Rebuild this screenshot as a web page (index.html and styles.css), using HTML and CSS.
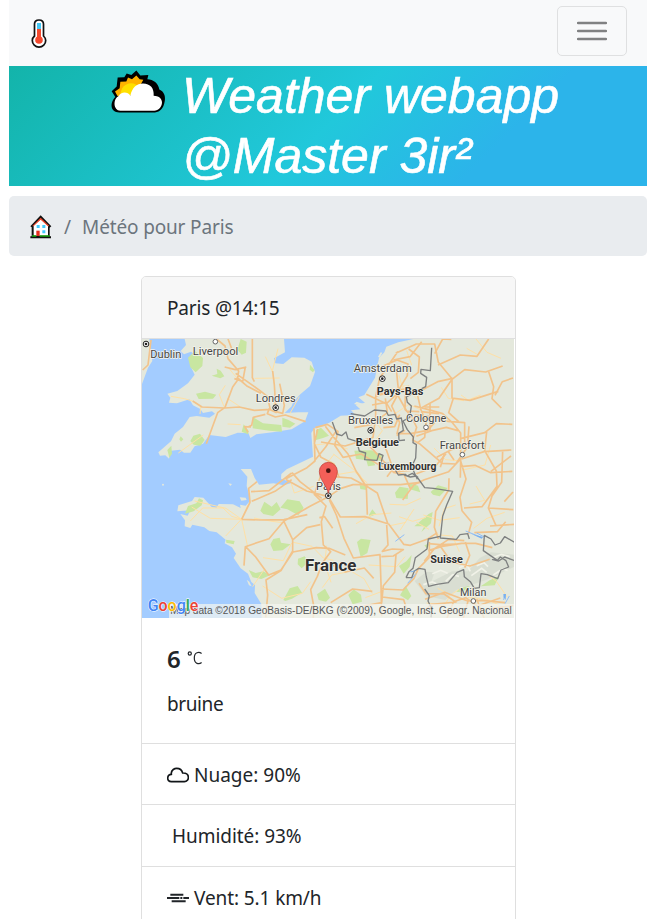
FILE: index.html
```
<!DOCTYPE html>
<html lang="fr">
<head>
<meta charset="utf-8">
<title>Weather webapp</title>
<link rel="stylesheet" href="styles.css">
</head>
<body>
<nav class="navbar">
  <a class="brand" aria-label="Accueil">
    <svg class="thermo" viewBox="0 0 16 30"><path d="M8 2C5.200 2 3.500 3.500 3.500 6v12C1.800 19.500 1.300 21 1.300 22.400A6.400 6.400 0 0 0 14.700 22.400c0-1.500-.7-3-2.200-4.400V6C12.500 3.500 10.800 2 8 2z" fill="#fff" stroke="#111" stroke-width="1.700"/><path d="M6 5h4v7H6z" fill="#45c8f5"/><path d="M6 11h4v10H6z" fill="#f4492e"/><circle cx="8" cy="22" r="3.800" fill="#f4492e"/></svg>
  </a>
  <button class="toggler" aria-label="Menu"><svg viewBox="0 0 30 30"><path d="M1 7h28M1 15h28M1 23h28" stroke="#808182" stroke-width="2.500" stroke-linecap="round"/></svg></button>
</nav>
<header class="hero">
  <svg class="sun-cloud" viewBox="0 0 240 165"><g transform="translate(0 -1) scale(1 1.045)"><path d="M46 93L35 76l15-13 3-26 20-1 7-11 14 5 15-13 12 14 24-1-3 12c18 0 33 12 36 29 15 6 19 20 16 35-3 19-14 30-29 31H58c-28 0-29-28-12-44z"/><path d="M52 89l-7-12 14-9 2-19 18-1 5-11 12 5 13-11 10 11 11 1-8 14-43 42z" fill="#ffb300"/><path d="M61 88c1-21 14-35 32-35 10 0 18 4 20 9L90 91z" fill="#ffe000"/><path d="M63 83c11-6 22-2 28 6 5-23 19-35 38-35 22 0 34 14 32 35 14 0 25 8 25 19 0 14-11 24-23 24H61c-21 0-23-33-5-42 2-3 4-5 7-7z" fill="#fff"/></g></svg>
  <h1>Weather webapp<br>@Master 3ir²</h1>
</header>
<nav class="breadcrumb">
  <svg class="home" viewBox="0 0 66 72"><path d="M5 64V37L1 34 32 1l32 33-5 4v26h4v6H1v-6z" fill="#111"/><path d="M11 62V32L32 12l22 20v30z" fill="#fff"/><path d="M7 33L32 8l26 25-4 1-22-20-22 20z" fill="#f0452b"/><path d="M20 30h9v9h-9zm17 0h9v9h-9zm0 16h9v9h-9z" fill="#42cafd"/><path d="M19 47h10v16H19z" fill="#e52d1e"/><path d="M6 61h13v4H6zm23 0h30v4H29z" fill="#16a60c"/></svg>
  <span class="slash">/</span><span class="crumb">Météo pour Paris</span>
</nav>
<main class="card">
  <div class="card-head"><span class="place">Paris @14:15</span></div>
  <svg class="map" viewBox="6 12 1116 837" preserveAspectRatio="none">
    <rect x="6" y="12" width="1116" height="837" fill="#a3ccff"/>
    <g class="land">
      <path d="M6 12H28L37 78 24 98 6 147z"/>
      <path d="M134 12L138 30 122 48 132 58 153 50 169 63 153 96 164 119 144 145 112 168 82 176 91 188 87 203 111 205 148 193 159 211 181 222 189 234 216 229 225 236 208 248 170 243 149 246 129 276 104 296 93 319 55 352 60 362 76 361 87 371 93 347 120 344 132 353 151 353 164 334 189 326 208 300 257 306 293 293 325 294 331 309 349 298 398 292 455 283 495 259 505 232 476 232 434 234 455 214 459 202 481 178 510 153 525 111 515 80 493 68 455 67 430 87 406 85 402 70 435 52 432 12z"/>
      <path d="M1122 12H820L775 22 739 35 733 52 717 69 705 128 673 180 655 187 675 203 647 210 661 223 633 226 646 240 602 242 568 263 523 280 514 294 519 365 440 403 424 417 423 431 457 443 431 451 401 445 357 449 344 429 333 402 302 402 322 425 320 453 328 481 330 498 317 512 300 509 302 519 279 508 236 507 230 518 215 516 190 488 164 486 156 498 115 511 112 529 151 526 143 542 121 537 135 556 134 574 151 579 157 569 193 577 208 588 230 592 257 614 254 625 276 637 288 656 281 669 302 700 324 716 334 741 345 750 344 774 364 807 365 849H1122z"/>
      <circle cx="69" cy="449" r="3"/><path d="M299 487l18 1 3 7-16 2zM265 445l11 2-5 6zM320 734l8 6 7 14-8-3zM714 65l8-13 5 1-8 15zM650 200l20 7-8 5-20-5z"/>
    </g>
    <g class="woods"><path d="M144 68l21-20 24 21-2 24-20 19-16-15zM168 176l27-6 34 9-10 12-43 1zM215 122l17-5-2-16 12 6 11 17-12 6zM302 12l18 8-2 33-13 6-13-15zM338 246l31 19 55 5 2 20-38-3-50-7zM427 248l17 6 22 12-16 12-23-3zM305 290l6-22 15 20-2 10zM151 318l9-16 20-6 14 19-13 17-20-3zM82 345l12-13 2 24-8 12zM122 304l8 9-7 7-5-7zM510 89l14 16-5 7-10-8zM528 286l15-8 24 24-18 7-21 6z"/><path d="M135 536l9-23 25-8 8-15 12 6-4 15-24 18zM361 527l12-27 22 15 15-14 12 22-23 20-29-6zM421 518l21-25 37 6 12 20-16 22-33-18zM391 628l9-16 19-4 4 15 29 5-24 18-28 2zM258 614l26 4-3 10-22-5zM326 705l21 9 23-5 20 12-26 11-26-5zM474 671l20-7 12 16-21 20-12-12zM430 795l19-35 24-7 13 20-30 18-20 7zM531 778l24-17 15 27-12 12-22-5z"/><path d="M643 347l51-1 36 15-2 16-30-1 8 15-22 3-5-18-31-5zM765 473l14-18 27 5-3 32-34-3zM806 444l28 8 7 20-31-9zM872 471l22-20 29 8-24 25-20-5zM687 539l10-16 12 15-20 7zM823 574l43-37 12-6-5 34-29 26 9-17zM651 621l12-10 29 4-10 39-20 12zM777 693l22-14 16-19-6 35-18 21zM780 781l17-29 17 31-10 13zM625 780l16-17 22 16 3 21-28 8zM949 770l18-22 23 7-25 17zM1022 754l27-18 29-13-14 28zM853 631l17-6-8 17zM659 451l24 0-4 14-18-3zM1011 728l19-18-8 23z"/></g>
    <path d="M824 738l35-28 25 2-10 28 62-31 48 0 35-40 34-17 69 7v37l-82 38-91 31-33 30-58-12z" class="alps"/>
    <path d="M877 716l25-10 21 9M917 739l21-20 19 5M957 699l23-11 11 21M994 722l31-22 15 12M1010 692l22-9 12 12M1060 720l28-18 15 4M850 749l27-8 21 9M1055 670l29-12 25 7" class="ridge"/>
    <g class="minor"><path d="M93 184l40 7 25 7M182 215l-2 22M252 215l-14-36 18-28M294 133l-28-34M344 130l75-1M376 65l21 44 7 40M280 60l-48-20M450 235l28-50M190 300l-75 54M300 215l-38-25M302 269l-39-2M404 225l-4-40M397 108l17-67M151 558l37-39 61 0 26 25 31 9M155 516l56 34 94 3-47-33-94-22M257 603l47-50 20-43M323 635l-18-82M369 668l61 9 25-53M372 704l-34 51M460 622l56 12 34 35 30 7M560 632l-6 53 19 57M368 753l57 37 62-15 25-35M430 563l-34-4-54-10M453 443l10 31 58-20M524 330l46-5 53 17M555 425l88-15 39 34M681 455l-23-38-78-60M582 358l-27 34M648 566l49-27 57-5M686 690l84 5 25-30M621 711l-46 9-28 38M697 775l-25-44-35-20M729 768l-53 20M777 545l41 14 40-12M842 490l-44 20-49-2M822 522l-42 64M867 583l-38-21M750 572l48-10M690 340l37-53-26-33M762 238l45-30 34 16M827 190l-18-36-22-1M777 121l12 42M815 90l-15-43M1022 180l-38 15-21-15M980 40l35 20M1083 70l-42-18-33-40M904 157l21 33 47 7M882 339l35 35 35 3M1052 330l-17 60-67 15M1008 453l26 43-45 11M1001 580l40-30 53-18M897 574l16-53 34-11M850 540l49 16 60-8M958 650l-21-47-51-4M1077 810l-36-17-57-6M932 777l-18 35-54-8M893 760l39 20 25-17M1102 787l-33-48-24-18"/></g>
    <g class="roads"><path d="M33 15l-9 75-16 15M158 198l28 18 68 3 44-3 45 10 49-3M230 12l25 21 9 38 32 37-5 30-13 18-23 61-22 16-15 41-19 52M264 12l13 34M337 12l0 116 6 12M254 96l32 8 33-8M287 115l73 52 22 17 9 40 19 9M293 129l29 25 41 21M316 96l-8 43-25-8M398 108l5 42 4 63M419 146l14 65-5 24-20-5M388 220l-6 16 24 10 30-6 61 20M376 238l-36 9-5 24-11 5M333 276l-19-1 10 17"/>
    <path d="M522 280l3 98-24 20-65 34M533 282l-10 44 20 41 39 20 16 42M526 278l36-10 32 21-10 42 25 36 55-10 50 31 48 22 50-4M523 378l34-42 33-50M545 490l-65-50-24-27M455 414l-68 53-54 3M565 485l-65-17-61-34M455 434l-50 35-70 30M565 485l38-25 36-11 53 0 90 0 59-7M565 485l-55 29-78 44-45 53-71 24-4 57M565 485l36 61 74-1 71 22 45 61 20 3 50-18 31-20M305 553l25-51-4-42 25-20M305 553l56 2 71-1 70-15M316 634l31 32 21 29 18 25 37-15 36-54 70-13 38 2 49 20M432 560l26 54 0 34-35 59-45 28 5 45-6 67M543 420l-20 58 35 35-14 47 6 70 22 20-25 34-15 40-20 40 10 53-3 42M460 613l40-35 41-9M568 495l21 45 23 70 28 59 80-10 3 87 2 98M740 570l4 60-17 19 30-7 33 2-30 19-36 2M768 659l-4 53-34 40-5 51-54 10M726 762l63 3 33-35 13-29 33-34 0-46M682 539l-3-84-31-47-24-51-42-49-26-34M679 453l33 21 31 91M682 455l-49-26-55-4M727 786l64 8 13 40M578 580l-24-35-16 3"/>
    <path d="M773 50l-54 79-12 56 0 61-8 61-84 26-72-12M724 95l47-20 33 12-2 35-29 47-55 11M767 55l62-28 55 0 11 55 41 49 0 58 54 7 85-27M736 190l6 43-46 35-53 10M679 178l60 28 37-33-7-70M807 153l-31 21-21 39 24 50-8 33 40 0 52-10 21-24M771 177l29 51 38 2M796 180l-1 43 19 20 16 34-12 38 23 13 66 57 40 2 35-50 5-63M823 213l40 10 45 13 28 26 26 32 0 80-1 54M824 240l60 6 39 13 51 4 0 87M845 218l52-28 38-56 39-30 63 7 51-18M833 182l9 40 16 40-4 45-24 18M829 304l46-17 44-10 35 10M964 310l70-17 35-27 48 2M965 372l67-22 82-5M962 372l-36 38-73 24-31 15-34 46M962 378l16 54-18 55 6 40 29 35-10 35M960 395l45-4 47 22 65-4M1040 290l-6 57 35 61 2 46-45 61-54 4M1088 348l-3 94-29 41-11 36 24 55M1045 519l75 5M1050 573l72-5M1093 500l26-29M741 425l18-24-19-54-21-33M811 461l-19-43-31-6-73-80M829 416l55-20 34-40"/>
    <path d="M760 75l50-10 35-45M806 42l32 24-3 46-24 19M706 185l46-22 57 1M696 210l42-8 17 28M770 302l25-16M870 206l0 85M853 216l45 0M843 230l54 6M847 244l47 2M730 278l34-3 15-36M884 56l24-44 26 1M894 90l67-30 50 4 35-52M938 130l-45 10-54 29M1065 181l22-41 32-11M1046 110l15 45-5 36 28 28M940 190l-14 43 30 27M901 397l12-40M942 375l-18-26M971 335l-34 8-47 24M1113 363l-61 47"/>
    <path d="M895 612l-12-35 4-48 39-64 1-35M867 626l32 3 48-2M865 647l41-13 59-9 42 0 50 13M853 678l30-37 43-28 47 4M900 632l34 49 56 12 59-20M976 621l13 40-15 37M1003 593l69-3 25-30M837 745l21 31 54 1 35 24M855 793l59-21 69 26 42-2 70 7M921 849l20-49 36-12 35 25 69-24M985 795l-15 54M1010 792l22 57M1055 820l65-8M837 841l38-33 75-7M701 730l-28-31-57 12-37-20M697 769l-59-7-66 41"/></g>
    <g class="rivers"><path d="M977 588l50 20M1094 777l-3 18M766 619l27-20M1010 594l25 13M828 716l-25 29M1108 783l-13 23"/></g>
    <g class="borders"><path d="M875 38l-4 69-28-4-1 12 18 12-3 28-24 12-34 19 3 16 12 11-5 34-20 11 13 26 18 22-1 17 10 6-2 40-12 26 17 38M577 261l13 36 15 5 13-11 6 20 26 8 8 29 19 6-3 20 37 2 6-20 12 5-7 25 24-1 18 17 11 18 21-2 5 5 16-8 17 12M632 236l42 7 29-18 35 3 7 13 20-3 5 14 14-3 3 17 3 20-14 9 1 22 18-2M793 420l18 6 18-3 25 35 27 2 57 9-18 41-12 34-7 65 48 4 11-14 23-3 5 16M900 604l-35 8-4 30-35 26-7 32-12 10-9 18M798 728h17l8-20 13-8 19 3 4 23 7 28 24-6 35-5 26-31 20-8 2 21 18 15 12 20 15-2 5-42 19 3 31 12 10-26 23-9-8-19-17-11-9 10-42-29 3-46 20 11 12 18 16-6 13-19 30 17 20-2M1056 673l20 5 18-12 28 10M854 762l14 20-4 16 12 25-3 24"/></g>
    <path d="M980 592l25 8 24 6-4 5-32-15zM807 711l24-7-15 8zM1090 777h8l-1 18-6-8z" fill="#79b0f0"/>
    <g class="label"><text x="31" y="68" textLength="93" lengthAdjust="spacingAndGlyphs">Dublin</text><text x="158" y="60" textLength="137" lengthAdjust="spacingAndGlyphs">Liverpool</text><text x="347" y="201" textLength="120" lengthAdjust="spacingAndGlyphs">Londres</text><text x="641" y="111" textLength="174" lengthAdjust="spacingAndGlyphs">Amsterdam</text><text x="624" y="267" textLength="136" lengthAdjust="spacingAndGlyphs">Bruxelles</text><text x="798" y="261" textLength="121" lengthAdjust="spacingAndGlyphs">Cologne</text><text x="899" y="343" textLength="135" lengthAdjust="spacingAndGlyphs">Francfort</text><text x="528" y="464" textLength="75" lengthAdjust="spacingAndGlyphs">Paris</text><text x="960" y="782" textLength="79" lengthAdjust="spacingAndGlyphs">Milan</text></g>
    <g class="label country"><text x="710" y="179" textLength="140" lengthAdjust="spacingAndGlyphs">Pays-Bas</text><text x="647" y="332" textLength="130" lengthAdjust="spacingAndGlyphs">Belgique</text><text x="715" y="404" textLength="174" lengthAdjust="spacingAndGlyphs">Luxembourg</text><text x="871" y="685" textLength="98" lengthAdjust="spacingAndGlyphs">Suisse</text><text x="495" y="709" textLength="154" lengthAdjust="spacingAndGlyphs" class="france">France</text></g>
    <g class="dots"><circle cx="226" cy="20" r="7"/><circle cx="858" cy="277" r="7"/><circle cx="967" cy="359" r="7"/><circle cx="1000" cy="798" r="7"/></g>
    <g class="capital-rings"><circle cx="18" cy="27" r="8.500"/><circle cx="407" cy="218" r="8.500"/><circle cx="727" cy="131" r="8.500"/><circle cx="692" cy="286" r="8.500"/><circle cx="565" cy="482" r="8.500"/></g>
    <g class="capitals"><circle cx="18" cy="27" r="4"/><circle cx="407" cy="218" r="4"/><circle cx="727" cy="131" r="4"/><circle cx="692" cy="286" r="4"/><circle cx="565" cy="482" r="4"/></g>
    <path d="M565 475c-5-25-27-41-27-66a27 27 0 0 1 54 0c0 25-22 41-27 66z" fill="#f35f58" stroke="#bb3933" stroke-width="2"/><circle cx="565" cy="407" r="7" fill="#481310"/>
    <rect x="87" y="807" width="1035" height="42" fill="#f4f5f0" opacity=".72"/>
    <text x="91" y="837" class="copyright" textLength="1024" lengthAdjust="spacingAndGlyphs">Map data ©2018 GeoBasis-DE/BKG (©2009), Google, Inst. Geogr. Nacional</text>
    <text x="23" y="829" class="google" textLength="152" lengthAdjust="spacingAndGlyphs"><tspan fill="#4285f4">G</tspan><tspan fill="#ea4335">o</tspan><tspan fill="#fbbc05">o</tspan><tspan fill="#4285f4">g</tspan><tspan fill="#34a853">l</tspan><tspan fill="#ea4335">e</tspan></text>
  </svg>
  <section class="card-body">
    <p class="temp"><strong>6</strong><svg class="unit" viewBox="0 0 46 40"><circle cx="8" cy="7" r="4.500"/><path d="M42 7C35 2 21 2 21 20s14 19 21 13"/></svg></p>
    <p class="condition"><span class="condition-text">bruine</span></p>
  </section>
  <ul class="details">
    <li><svg class="icon" viewBox="0 0 66 48"><path d="M13 44C-2 44-1 23 13 22 11 7 25 4 29 4c10 0 16 6 18 14 23-1 21 26 5 26z" fill="none" stroke="#111518" stroke-width="5"/></svg><span class="cloud-text">Nuage: 90%</span></li>
    <li><span class="humidity-text">Humidité: 93%</span></li>
    <li><svg class="icon" viewBox="0 0 66 48"><path d="M10 14h39M0 24h37m3 0h6m3 0h17M14 34h42" stroke="#212529" stroke-width="6"/></svg><span class="wind-text">Vent: 5.1 km/h</span></li>
  </ul>
</main>
</body>
</html>
```
FILE: styles.css
```
* { box-sizing: border-box; }
html { overflow: hidden; }
body { margin: 0 20px 0 9px; background: #fff; color: #212529; font: 400 19px/30px "Noto Sans", sans-serif; height: 919px; overflow: hidden; }
p, h1, ul { margin: 0; padding: 0; }
.navbar { height: 66px; background: #f8f9fa; padding: 6px 20px; display: flex; justify-content: space-between; align-items: flex-start; }
.brand { display: flex; padding: 12px 0 0 2px; }
.thermo { width: 16px; height: 30px; }
.toggler { width: 70px; height: 50px; border: 1px solid #dfe0e1; border-radius: 5px; background: transparent; padding: 9px 19px; }
.toggler svg { width: 30px; height: 30px; display: block; }
.hero { height: 120px; background: linear-gradient(135deg, #13b4aa 0%, #21c8db 50%, #2cb4ea 75%); display: flex; color: #fff; padding-left: 91px; }
.sun-cloud { width: 80px; height: 55px; margin-top: -1px; flex: none; }
.hero h1 { margin-left: 2px; font: italic 400 50px/60px "Liberation Sans", sans-serif; white-space: nowrap; -webkit-text-stroke: .6px #fff; }
.breadcrumb { margin-top: 10px; height: 60px; background: #e9ecef; border-radius: 5px; display: flex; align-items: center; padding: 2px 0 0 21px; color: #6c757d; }
.home { width: 22px; height: 24px; }
.slash { margin: 0 11px 0 12px; }
.crumb { letter-spacing: -.15px; }
.card { width: 375px; margin: 20px 0 0 132px; border: 1px solid #dfdfdf; border-radius: 5px; background: #fff; }
.card-head { height: 62px; background: #f7f7f7; border-bottom: 1px solid #dfdfdf; padding: 16px 25px 15px; border-radius: 4px 4px 0 0; }
.place { letter-spacing: -.17px; }
.map { display: block; width: 372px; height: 279px; }
.card-body { height: 125px; padding: 25px; }
.temp { display: flex; height: 30px; }
.temp strong { font-size: 24px; line-height: 32px; font-weight: 600; }
.unit { width: 16px; height: 14px; margin: 8px 0 0 6px; fill: none; stroke: #212529; stroke-width: 3.5; }
.condition { margin-top: 16px; }
.condition-text { letter-spacing: -.4px; }
.details { list-style: none; }
.details li { height: 61.333px; border-top: 1px solid #dfdfdf; padding: 16px 25px 0; display: flex; }
.icon { width: 22px; height: 16px; margin: 7px 5px 0 0; flex: none; }
.humidity-text { margin-left: 5px; letter-spacing: -.05px; }
.wind-text { letter-spacing: -.1px; }
.land { fill: #e4e8dc; }
.woods { fill: #c8e6a1; }
.alps { fill: #d9ded2; }
.ridge { fill: none; stroke: #f1f2e8; stroke-width: 5; }
.minor { fill: none; stroke: #ffe0a5; stroke-width: 3; stroke-linejoin: round; }
.roads { fill: none; stroke: #f2c38b; stroke-width: 5; stroke-linejoin: round; }
.rivers { fill: none; stroke: #91bef7; stroke-width: 3; }
.borders { fill: none; stroke: #7e8080; stroke-width: 4; stroke-linejoin: round; }
.label { font: 34px Roboto, sans-serif; fill: #454545; stroke: #f5f5ed; stroke-width: 4; paint-order: stroke; }
.country { font-size: 32px; font-weight: 700; fill: #303030; }
.france { font-size: 48px; }
.dots { fill: #fff; stroke: #666; stroke-width: 3; }
.capital-rings { fill: #fff; stroke: #222; stroke-width: 3; }
.capitals { fill: #222; }
.copyright { font: 30px "Liberation Sans", sans-serif; fill: #565656; }
.google { font: 500 50px Roboto, sans-serif; stroke: #fff; stroke-width: 3; paint-order: stroke; }
```
